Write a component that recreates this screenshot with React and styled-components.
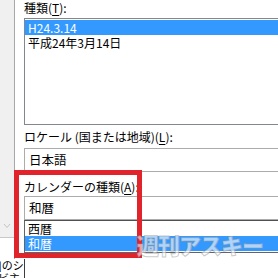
import React from "react";
import styled, { createGlobalStyle } from "styled-components";

const GlobalStyle = createGlobalStyle`
  body {
    margin: 0;
    background: #ffffff;
    font-family: "Noto Sans CJK JP", "Noto Sans", sans-serif;
    font-size: 12px;
    color: #000000;
  }
`;

const Screen = styled.div`
  position: relative;
  display: flex;
  width: 278px;
  height: 278px;
  overflow: hidden;
`;

const Sidebar = styled.div`
  display: flex;
  flex-direction: column;
  width: 14px;
  flex-shrink: 0;
`;

const SidebarPanel = styled.div`
  display: flex;
  align-items: flex-end;
  justify-content: center;
  height: 238px;
  padding-bottom: 8px;
  box-sizing: border-box;
  background: #f0f0f0;
  border-bottom: 1px solid #c8c8c8;
`;

const Dialog = styled.div`
  flex: 1;
  display: flex;
  flex-direction: column;
  border-left: 1px solid #a8a8a8;
  padding-left: 9px;
  min-width: 0;
`;

const Label = styled.div`
  height: 16px;
  line-height: 16px;
  margin-top: ${(p) => p.$top}px;
  white-space: nowrap;
  u {
    text-decoration-thickness: 1px;
    text-underline-offset: 2px;
  }
`;

const ListBox = styled.div`
  margin-top: 2px;
  height: 107px;
  width: calc(100% + 20px);
  border: 1px solid #828790;
  padding: 1px 0 0 0;
  box-sizing: border-box;
`;

const Row = styled.div`
  height: ${(p) => p.$h || 15}px;
  line-height: ${(p) => p.$h || 15}px;
  padding-left: 3px;
  white-space: nowrap;
  background: ${(p) => (p.$selected ? "#3399ff" : "transparent")};
  color: ${(p) => (p.$selected ? "#ffffff" : "#000000")};
`;

const Combo = styled.div`
  margin-top: ${(p) => p.$top}px;
  height: 24px;
  line-height: 22px;
  width: calc(100% + 20px);
  box-sizing: border-box;
  border: 1px solid #acacac;
  padding-left: 4px;
  font-size: 12.5px;
`;

const DropList = styled.div`
  height: 33px;
  width: calc(100% + 20px);
  box-sizing: border-box;
  border: 1px solid #646464;
  border-top-color: #505050;
`;

const Highlight = styled.div`
  position: absolute;
  left: 14px;
  top: 170px;
  width: 128px;
  height: 88px;
  box-sizing: border-box;
  border: 5px solid #e1232c;
`;

const BackWindow = styled.div`
  position: absolute;
  left: 0;
  top: 259px;
  width: 24px;
  height: 19px;
  background: #ffffff;
  border-right: 1px solid #3c3c3c;
  overflow: hidden;
  font-size: 11px;
`;

const BackLine = styled.div`
  height: 13px;
  line-height: 13px;
  white-space: nowrap;
  margin-left: -2px;
`;

const Watermark = styled.div`
  position: absolute;
  left: 137px;
  top: 228px;
  font-size: 22px;
  font-weight: 900;
  letter-spacing: -1px;
  color: rgba(255, 255, 255, 0.6);
  -webkit-text-stroke: 1px rgba(150, 150, 150, 0.5);
  white-space: nowrap;
  pointer-events: none;
`;

const Chevron = () => (
  <svg width="8" height="6" viewBox="0 0 8 6">
    <polyline points="1,1 4,4.5 7,1" fill="none" stroke="#c4c4c4" strokeWidth="1" />
  </svg>
);

export default function App() {
  return (
    <Screen>
      <GlobalStyle />
      <Sidebar>
        <SidebarPanel>
          <Chevron />
        </SidebarPanel>
      </Sidebar>
      <Dialog>
        <Label $top={0}>
          種類(<u>T</u>):
        </Label>
        <ListBox>
          <Row $selected>H24.3.14</Row>
          <Row $h={16}>平成24年3月14日</Row>
        </ListBox>
        <Label $top={4}>
          ロケール (国または地域)(<u>L</u>):
        </Label>
        <Combo $top={3}>日本語</Combo>
        <Label $top={7}>
          カレンダーの種類(<u>A</u>):
        </Label>
        <Combo $top={1}>和暦</Combo>
        <DropList>
          <Row>西暦</Row>
          <Row $selected>和暦</Row>
        </DropList>
      </Dialog>
      <Highlight />
      <BackWindow>
        <BackLine>]のシ</BackLine>
        <BackLine>ビ主</BackLine>
      </BackWindow>
      <Watermark>週刊アスキー</Watermark>
    </Screen>
  );
}
